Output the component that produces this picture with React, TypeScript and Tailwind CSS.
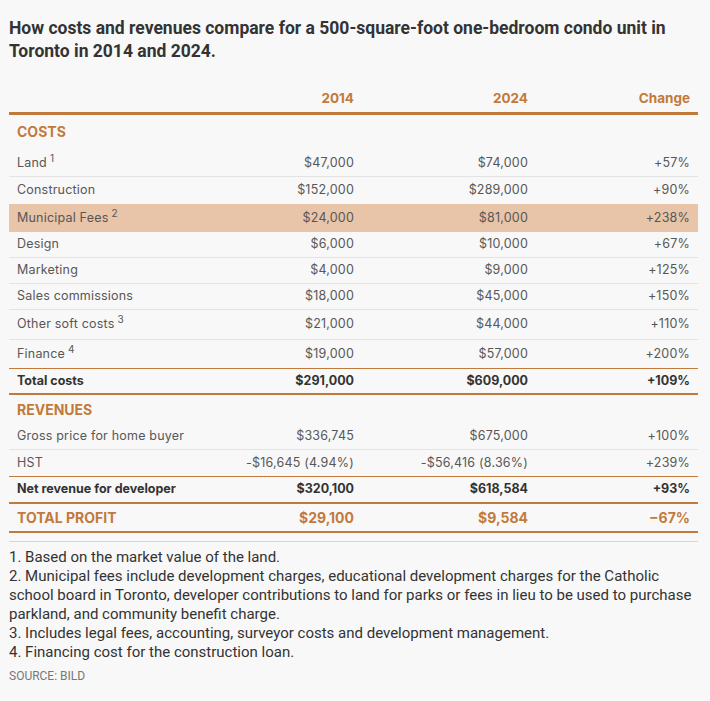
import type { ReactNode } from 'react';

type Row = {
  label: ReactNode;
  a: string;
  b: string;
  c: string;
  h: string;
  kind?: 'plain' | 'hl';
  border?: string;
};

const ORANGE = 'text-[#c27a3c]';

function Label({ text, note }: { text: string; note?: string }) {
  return (
    <span>
      {text}
      {note && <sup className="ml-[3px] text-[10px]">{note}</sup>}
    </span>
  );
}

const COSTS: Row[] = [
  { label: <Label text="Land" note="1" />, a: '$47,000', b: '$74,000', c: '+57%', h: 'h-[27px]', border: 'border-b border-[#e3e3e3]' },
  { label: 'Construction', a: '$152,000', b: '$289,000', c: '+90%', h: 'h-[27px]' },
  { label: <Label text="Municipal Fees" note="2" />, a: '$24,000', b: '$81,000', c: '+238%', h: 'h-[28px]', kind: 'hl' },
  { label: 'Design', a: '$6,000', b: '$10,000', c: '+67%', h: 'h-[26px]', border: 'border-b border-[#e3e3e3]' },
  { label: 'Marketing', a: '$4,000', b: '$9,000', c: '+125%', h: 'h-[26px]', border: 'border-b border-[#e3e3e3]' },
  { label: 'Sales commissions', a: '$18,000', b: '$45,000', c: '+150%', h: 'h-[26px]', border: 'border-b border-[#e3e3e3]' },
  { label: <Label text="Other soft costs" note="3" />, a: '$21,000', b: '$44,000', c: '+110%', h: 'h-[30px]', border: 'border-b border-[#e3e3e3]' },
  { label: <Label text="Finance" note="4" />, a: '$19,000', b: '$57,000', c: '+200%', h: 'h-[28px]' },
];

function DataRow({ row }: { row: Row }) {
  const bg = row.kind === 'hl' ? 'bg-[#e8c4a8]' : '';
  return (
    <div className={`flex items-center pl-2 pr-2 text-[12.5px] tracking-[0.2px] text-[#575757] ${row.h} ${bg} ${row.border ?? ''}`}>
      <div className="flex-1">{row.label}</div>
      <div className="w-[160px] text-right">{row.a}</div>
      <div className="w-[174px] text-right">{row.b}</div>
      <div className="w-[162px] text-right">{row.c}</div>
    </div>
  );
}

function BoldRow({ label, a, b, c, cls }: { label: string; a: string; b: string; c: string; cls: string }) {
  return (
    <div className={`flex items-center pl-2 pr-2 font-bold ${cls}`}>
      <div className="flex-1">{label}</div>
      <div className="w-[160px] text-right">{a}</div>
      <div className="w-[174px] text-right">{b}</div>
      <div className="w-[162px] text-right">{c}</div>
    </div>
  );
}

export default function App() {
  return (
    <div className="h-[701px] w-[710px] bg-[#f8f8f8] pl-[9px] pr-[12px] font-['Inter',sans-serif]">
      <h1 className="pt-[17px] font-['Roboto',sans-serif] text-[17.5px] font-bold leading-[23px] text-[#333]">
        How costs and revenues compare for a 500-square-foot one-bedroom condo unit in Toronto in 2014 and 2024.
      </h1>

      <div className="mt-[22px]">
        <div className={`flex h-[30px] items-center border-b-[3px] border-[#c27a3c] pr-2 text-[13.5px] font-bold ${ORANGE}`}>
          <div className="flex-1" />
          <div className="w-[160px] text-right">2014</div>
          <div className="w-[174px] text-right">2024</div>
          <div className="w-[162px] text-right">Change</div>
        </div>

        <div className={`flex h-[35px] items-center pb-[3px] pl-2 text-[14px] font-bold ${ORANGE}`}>COSTS</div>
        {COSTS.map((r, i) => (
          <DataRow key={i} row={r} />
        ))}
        <BoldRow
          label="Total costs"
          a="$291,000"
          b="$609,000"
          c="+109%"
          cls="h-[27px] border-y border-b-2 border-[#c27a3c] text-[12.5px] text-[#333]"
        />

        <div className={`flex h-[29px] items-center pl-2 text-[14px] font-bold ${ORANGE}`}>REVENUES</div>
        <DataRow row={{ label: 'Gross price for home buyer', a: '$336,745', b: '$675,000', c: '+100%', h: 'h-[26px]', border: 'border-b border-[#e3e3e3]' }} />
        <DataRow row={{ label: 'HST', a: '-$16,645 (4.94%)', b: '-$56,416 (8.36%)', c: '+239%', h: 'h-[26px]' }} />
        <BoldRow
          label="Net revenue for developer"
          a="$320,100"
          b="$618,584"
          c="+93%"
          cls="h-[28px] border-t border-b-2 border-[#c27a3c] text-[12.5px] text-[#333]"
        />
        <BoldRow
          label="TOTAL PROFIT"
          a="$29,100"
          b="$9,584"
          c="−67%"
          cls={`h-[29px] border-b-2 border-[#c27a3c] text-[14px] ${ORANGE}`}
        />
      </div>

      <div className="mt-[8px] border-t border-[#d3d8de] pt-[6px] font-['Roboto',sans-serif] text-[15px] leading-[19px] text-[#333]">
        <p>1. Based on the market value of the land.</p>
        <p>
          2. Municipal fees include development charges, educational development charges for the Catholic school board in Toronto, developer contributions to land for parks or fees in lieu to be used to purchase parkland, and community benefit charge.
        </p>
        <p>3. Includes legal fees, accounting, surveyor costs and development management.</p>
        <p>4. Financing cost for the construction loan.</p>
        <p className="mt-[5px] text-[12px] text-[#777]">SOURCE: BILD</p>
      </div>
    </div>
  );
}
